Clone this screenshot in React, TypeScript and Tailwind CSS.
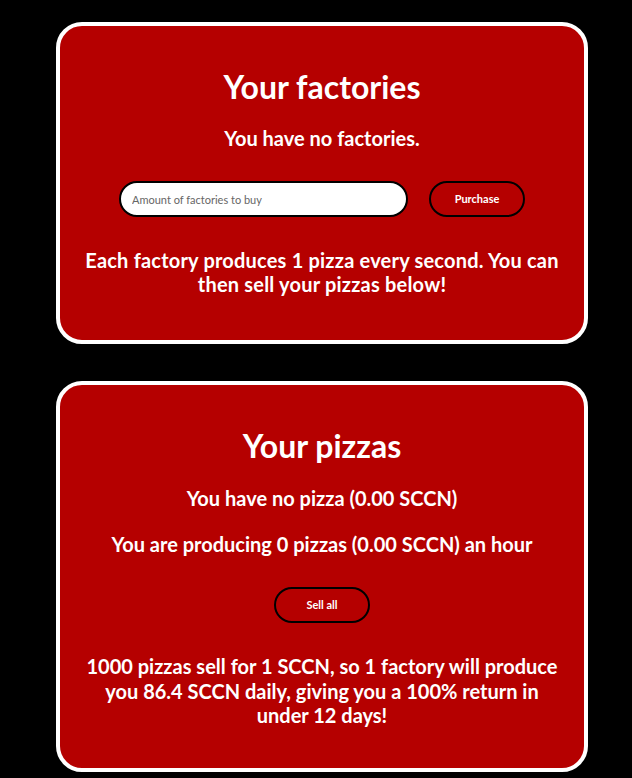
import React from "react";

const font = { fontFamily: '"Lato", "Noto Sans", sans-serif' };

export default function App() {
  return (
    <div className="min-h-[778px] w-[632px] bg-black pt-[22px] pb-[8px]" style={font}>
      <div className="ml-[56px] w-[532px] flex flex-col gap-[37px]">
        <section className="rounded-[26px] border-[4px] border-white bg-[#b50000] text-white flex flex-col items-center pt-[41px] pb-[44px] px-[16px]">
          <h1 className="text-[32px] font-bold leading-[40px]">Your factories</h1>
          <p className="mt-[19px] text-[20px] font-bold leading-[24px]">You have no factories.</p>
          <div className="mt-[31px] flex items-center gap-[21px]">
            <input
              className="w-[289px] h-[36px] rounded-full border-2 border-black bg-white px-[11px] text-[11px] text-[#666] outline-none placeholder:text-[#666]"
              placeholder="Amount of factories to buy"
            />
            <button className="w-[96px] h-[36px] rounded-full border-2 border-black text-[11px] font-bold text-white">
              Purchase
            </button>
          </div>
          <p className="mt-[31px] text-[20px] font-bold leading-[24px] text-center tracking-[0.2px]">
            Each factory produces 1 pizza every second. You can then sell your pizzas below!
          </p>
        </section>
        <section className="rounded-[26px] border-[4px] border-white bg-[#b50000] text-white flex flex-col items-center pt-[41px] pb-[40px] px-[12px]">
          <h1 className="text-[32px] font-bold leading-[40px]">Your pizzas</h1>
          <p className="mt-[20px] text-[20px] font-bold leading-[24px]">You have no pizza (0.00 SCCN)</p>
          <p className="mt-[22px] text-[20px] font-bold leading-[24px]">You are producing 0 pizzas (0.00 SCCN) an hour</p>
          <button className="mt-[31px] w-[96px] h-[36px] rounded-full border-2 border-black text-[11px] font-bold text-white">
            Sell all
          </button>
          <p className="mt-[31px] w-[476px] text-[20px] font-bold leading-[24.5px] text-center">
            1000 pizzas sell for 1 SCCN, so 1 factory will produce you 86.4 SCCN daily, giving you a 100% return in under 12 days!
          </p>
        </section>
      </div>
    </div>
  );
}
